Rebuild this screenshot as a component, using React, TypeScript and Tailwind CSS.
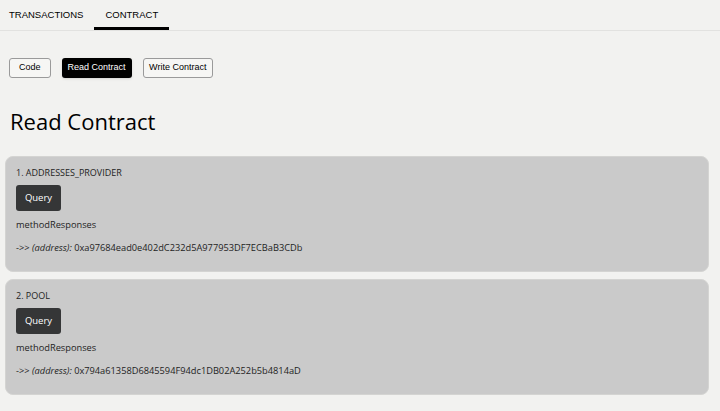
import React from "react";

const methods = [
  {
    name: "1. ADDRESSES_PROVIDER",
    value: "0xa97684ead0e402dC232d5A977953DF7ECBaB3CDb",
  },
  {
    name: "2. POOL",
    value: "0x794a61358D6845594F94dc1DB02A252b5b4814aD",
  },
];

const poppins = { fontFamily: '"Open Sans", "Noto Sans", sans-serif' };

const App = () => {
  return (
    <div
      className="min-h-[411px] w-[720px] bg-[#f2f2f0] text-black"
      style={{ fontFamily: '"Liberation Sans", Arial, sans-serif' }}
    >
      {/* tabs */}
      <div className="flex h-[31px] border-b border-[#e2e2e0]">
        <div className="flex h-full items-center pl-[9px] pr-[10px] text-[9.5px]">
          TRANSACTIONS
        </div>
        <div className="ml-[1px] flex h-full items-center border-b-[3px] border-black px-[11px] pt-[3px] text-[9.5px]">
          CONTRACT
        </div>
      </div>

      {/* sub tabs */}
      <div className="flex gap-[11px] px-[9px] pt-[27px]">
        <button className="h-[20px] rounded-[3px] border border-[#9a9a9a] bg-[#f6f6f4] px-[9px] text-[9px]">
          Code
        </button>
        <button className="h-[20px] rounded-[3px] bg-black px-[6px] text-[9px] text-white shadow-sm">
          Read Contract
        </button>
        <button className="h-[20px] rounded-[3px] border border-[#9a9a9a] bg-[#f6f6f4] px-[5.5px] text-[9px]">
          Write Contract
        </button>
      </div>

      <h1 className="mt-[28px] pl-[10px] text-[22px] leading-[30px]" style={poppins}>
        Read Contract
      </h1>

      <div className="mt-[20px] flex flex-col gap-[7px] pl-[5px] pr-[11px]" style={poppins}>
        {methods.map((m) => (
          <div
            key={m.name}
            className="h-[116px] rounded-[8px] border border-[#d4d4d2] bg-[#cacaca] px-[10px] pt-[10px] text-[#1e1e1e]"
          >
            <div className="text-[9px] leading-[12px]">{m.name}</div>
            <button className="mt-[6px] h-[26px] w-[45px] rounded-[3px] bg-[#353637] text-[9.5px] text-white">
              Query
            </button>
            <div className="mt-[8px] text-[9.25px] leading-[12px]">methodResponses</div>
            <div className="mt-[11px] text-[9.25px] leading-[12px]">
              -&gt;&gt; <span className="italic">(address):</span> {m.value}
            </div>
          </div>
        ))}
      </div>
    </div>
  );
};

export default App;
